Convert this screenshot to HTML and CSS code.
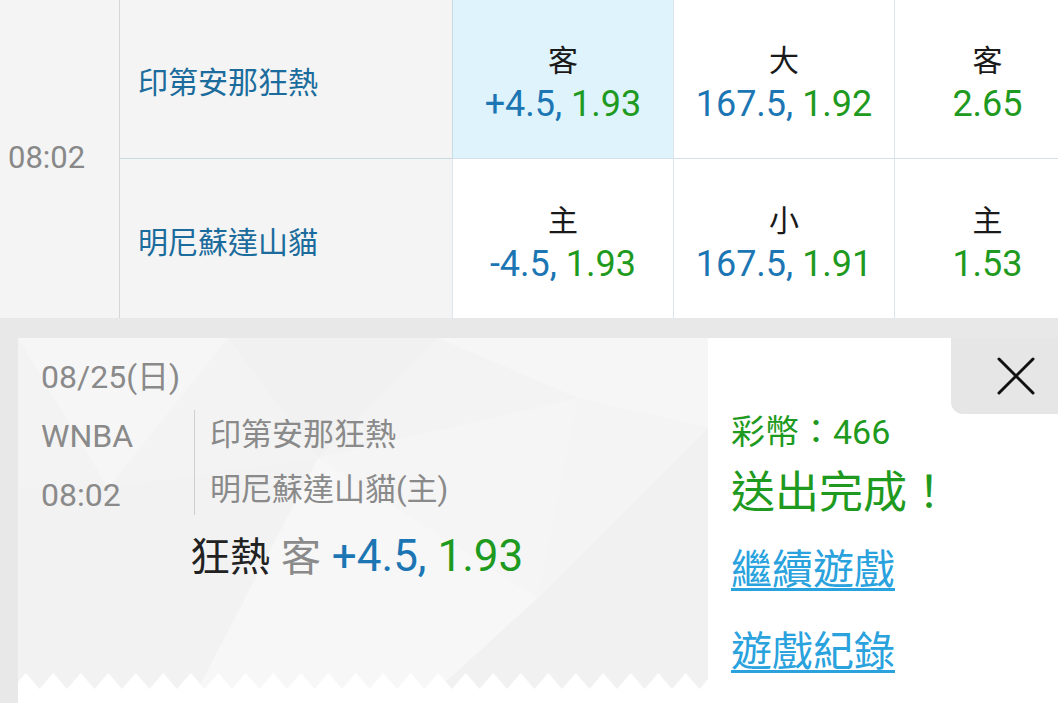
FILE: index.html
```html
<!DOCTYPE html>
<html lang="zh-Hant">
<head>
    <meta charset="UTF-8">
    <meta name="viewport" content="width=device-width, initial-scale=1.0">
    <title>投注確認</title>
    <link rel="stylesheet" href="styles.css">
</head>
<body>

    <div class="odds-table">
        <div class="time-cell">08:02</div>

        <div class="team-cell">印第安那狂熱</div>
        <div class="odds-cell selected">
            <span class="label">客</span>
            <span class="num"><span class="line">+4.5,</span> <span class="price">1.93</span></span>
        </div>
        <div class="odds-cell">
            <span class="label">大</span>
            <span class="num"><span class="line">167.5,</span> <span class="price">1.92</span></span>
        </div>
        <div class="odds-cell">
            <span class="label">客</span>
            <span class="num"><span class="price">2.65</span></span>
        </div>

        <div class="team-cell last">明尼蘇達山貓</div>
        <div class="odds-cell last">
            <span class="label">主</span>
            <span class="num"><span class="line">-4.5,</span> <span class="price">1.93</span></span>
        </div>
        <div class="odds-cell last">
            <span class="label">小</span>
            <span class="num"><span class="line">167.5,</span> <span class="price">1.91</span></span>
        </div>
        <div class="odds-cell last">
            <span class="label">主</span>
            <span class="num"><span class="price">1.53</span></span>
        </div>
    </div>

    <div class="result-area">
        <div class="result-card">
            <div class="ticket">
                <svg class="ticket-bg" width="690" height="351" viewBox="0 0 690 351">
                    <polygon points="0,0 210,0 90,150" fill="#f6f6f6"/>
                    <polygon points="210,0 420,0 300,120" fill="#f1f1f1"/>
                    <polygon points="420,0 690,0 690,90 560,60" fill="#f6f6f6"/>
                    <polygon points="0,150 90,150 300,120 180,351 0,351" fill="#f2f2f2"/>
                    <polygon points="300,120 560,60 520,260" fill="#f5f5f5"/>
                    <polygon points="180,351 300,120 520,260 420,351" fill="#f7f7f7"/>
                    <polygon points="520,260 690,90 690,351 420,351" fill="#f1f1f1"/>
                    <polygon points="560,60 690,90 520,260" fill="#f4f4f4"/>
                </svg>
                <div class="ticket-body">
                    <div class="ticket-date">08/25(日)</div>
                    <div class="ticket-info">
                        <div class="ticket-meta">
                            <div>WNBA</div>
                            <div>08:02</div>
                        </div>
                        <div class="ticket-teams">
                            <div>印第安那狂熱</div>
                            <div>明尼蘇達山貓(主)</div>
                        </div>
                    </div>
                    <div class="ticket-pick">
                        <span class="pick-team">狂熱</span>
                        <span class="pick-side">客</span>
                        <span class="line">+4.5,</span> <span class="price">1.93</span>
                    </div>
                </div>
                <svg class="zigzag" width="690" height="16" viewBox="0 0 690 16">
                    <defs>
                        <pattern id="teeth" width="27.5" height="16" patternUnits="userSpaceOnUse" x="-6">
                            <path d="M0 16 L13.75 0 L27.5 16 Z" fill="#ffffff"/>
                        </pattern>
                    </defs>
                    <rect width="690" height="16" fill="url(#teeth)"/>
                </svg>
            </div>

            <div class="status">
                <div class="coins">彩幣：466</div>
                <div class="done">送出完成！</div>
                <a class="status-link first" href="#">繼續遊戲</a>
                <a class="status-link" href="#">遊戲紀錄</a>
            </div>

            <button class="close-btn" type="button" aria-label="關閉">
                <svg width="38" height="38" viewBox="0 0 38 38">
                    <path d="M2 2 L36 36 M36 2 L2 36" stroke="#111" stroke-width="3" stroke-linecap="round" fill="none"/>
                </svg>
            </button>
        </div>
    </div>

</body>
</html>
```

FILE: styles.css
```css
body {
    margin: 0;
    padding: 0;
    width: 1058px;
    height: 703px;
    overflow: hidden;
    background-color: #e8e8e8;
    font-family: Roboto, "Noto Sans CJK TC", sans-serif;
}
.odds-table {
    display: grid;
    grid-template-columns: 120px 332px 221px 221px 186px;
    grid-template-rows: 159px 159px;
    width: 1080px;
    background-color: #ffffff;
}
.time-cell {
    grid-row: 1 / span 2;
    display: flex;
    align-items: center;
    padding-left: 8px;
    padding-bottom: 3px;
    box-sizing: border-box;
    background-color: #f4f4f4;
    border-right: 1px solid #d6d6d6;
    color: #888;
    font-size: 31px;
}
.team-cell {
    display: flex;
    align-items: center;
    padding-left: 18px;
    padding-top: 2px;
    box-sizing: border-box;
    background-color: #f4f4f4;
    border-bottom: 1px solid #c9d9e2;
    color: #1b6c9c;
    font-size: 30px;
}
.odds-cell {
    display: flex;
    flex-direction: column;
    align-items: center;
    justify-content: center;
    padding-top: 7px;
    box-sizing: border-box;
    border-left: 1px solid #dde5ea;
    border-bottom: 1px solid #d3e0e8;
}
.odds-cell.last {
    border-bottom: none;
    padding-top: 8px;
}
.team-cell.last {
    border-bottom: none;
    padding-top: 2px;
}
.odds-cell.selected {
    background-color: #def3fc;
    border-left-color: #c9dce6;
}
.label {
    font-size: 30px;
    line-height: 42px;
    color: #1a1a1a;
}
.num {
    font-size: 36px;
    line-height: 44px;
}
.line {
    color: #1b76b3;
}
.price {
    color: #1f9a20;
}
.result-area {
    padding: 20px 0 0 18px;
}
.result-card {
    position: relative;
    display: flex;
    height: 365px;
    background-color: #ffffff;
}
.ticket {
    position: relative;
    width: 690px;
    height: 351px;
    background-color: #f3f3f3;
}
.ticket-bg {
    position: absolute;
    top: 0;
    left: 0;
}
.zigzag {
    position: absolute;
    left: 0;
    bottom: 0;
    display: block;
}
.ticket-body {
    position: relative;
    padding: 19px 0 0 23px;
}
.ticket-date {
    font-size: 32px;
    line-height: 40px;
    color: #8a8a8a;
}
.ticket-info {
    display: flex;
    margin-top: 10px;
}
.ticket-meta {
    width: 153px;
    font-size: 32px;
    line-height: 59px;
    color: #8a8a8a;
}
.ticket-teams {
    height: 105px;
    margin-top: 3px;
    padding-left: 15px;
    border-left: 1px solid #cfcfcf;
    font-size: 31px;
    line-height: 55px;
    color: #8a8a8a;
}
.ticket-teams div:first-child {
    margin-top: -3px;
}
.ticket-pick {
    margin-top: 6px;
    padding-left: 149px;
    font-size: 44px;
    line-height: 50px;
}
.pick-team {
    color: #222;
    font-size: 40px;
}
.pick-side {
    color: #8a8a8a;
    font-size: 40px;
}
.status {
    display: flex;
    flex-direction: column;
    align-items: flex-start;
    padding: 72px 0 0 23px;
}
.coins {
    font-size: 34px;
    line-height: 44px;
    color: #1f9a20;
}
.done {
    margin-top: 11px;
    font-size: 44px;
    line-height: 56px;
    color: #1f9a20;
}
.status-link {
    margin-top: 26px;
    font-size: 41px;
    line-height: 56px;
    color: #29a2dd;
    text-decoration: underline;
    text-decoration-thickness: 3px;
    text-underline-offset: 4px;
}
.status-link.first {
    margin-top: 21px;
}
.close-btn {
    position: absolute;
    top: 0;
    right: 0;
    width: 107px;
    height: 76px;
    padding: 0;
    border: none;
    border-bottom-left-radius: 12px;
    background-color: #e6e6e6;
    display: flex;
    align-items: center;
    justify-content: center;
    padding-left: 22px;
    cursor: pointer;
}
```
